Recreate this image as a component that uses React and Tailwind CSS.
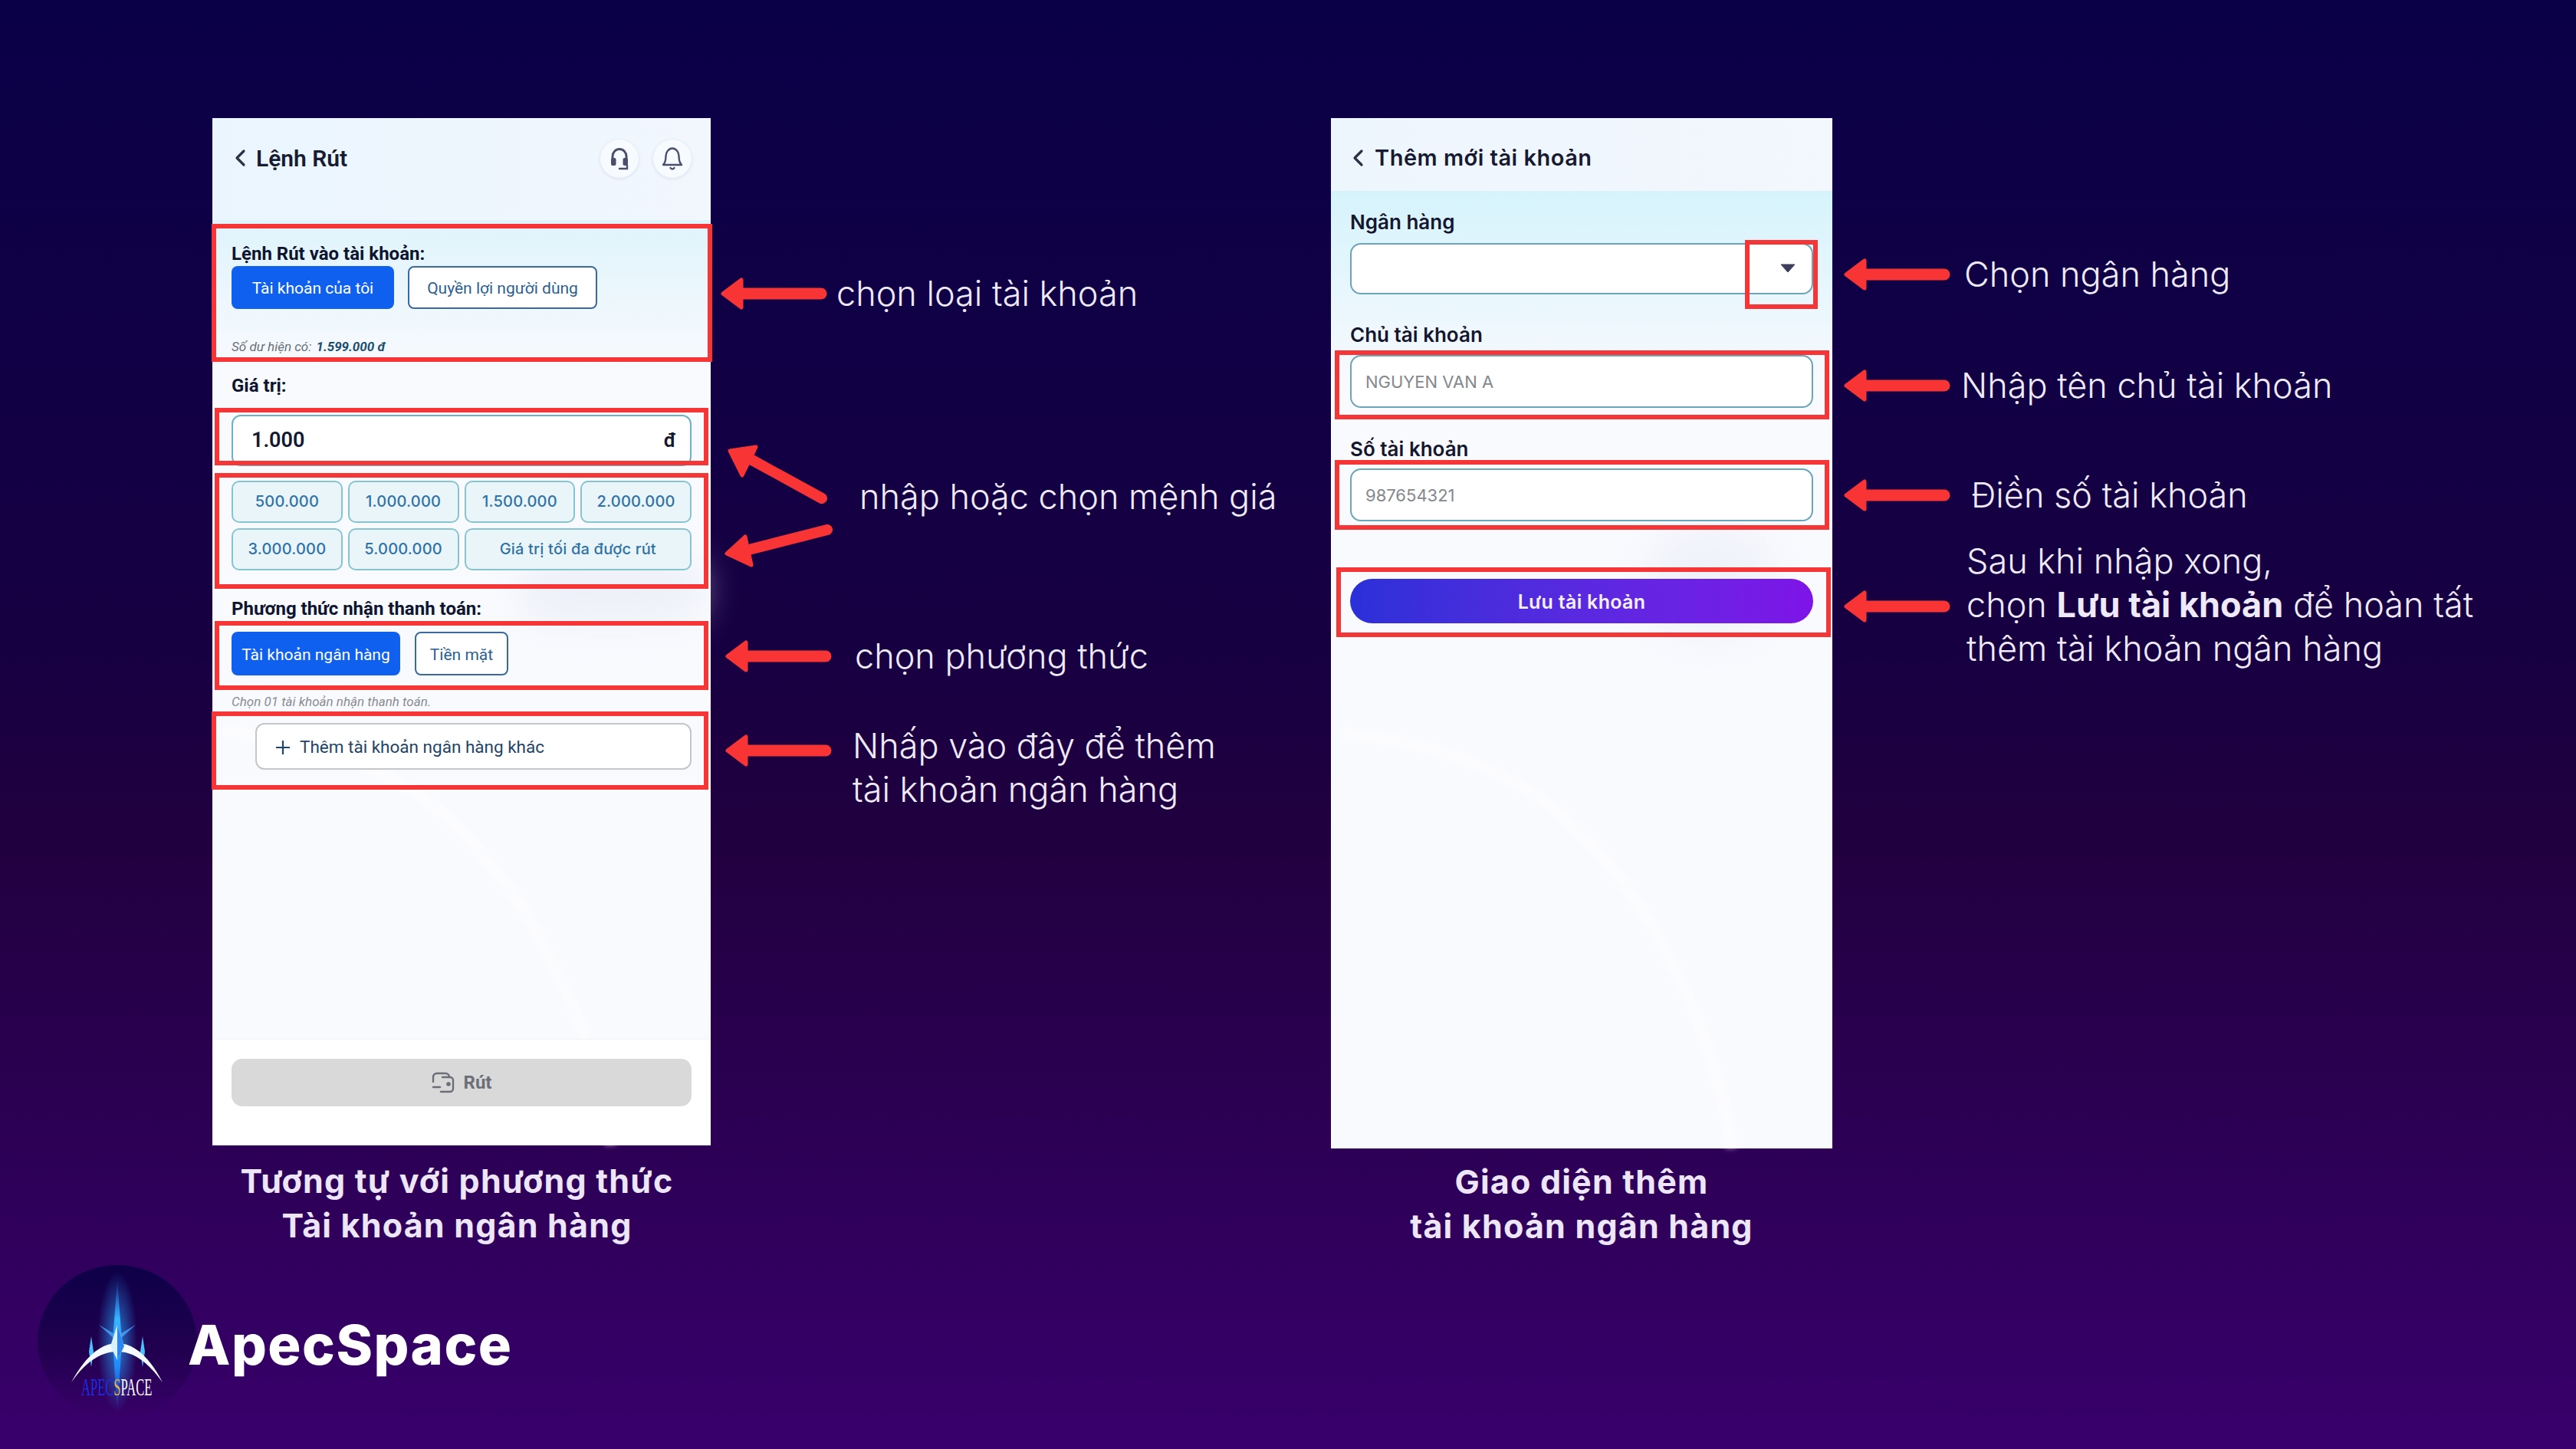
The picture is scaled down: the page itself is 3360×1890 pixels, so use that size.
const note = "font-['Inter',sans-serif] font-light text-[45px] leading-[57px] text-[#efeafa] whitespace-nowrap"
const active = "flex items-center justify-center pt-[4px] rounded-[8px] bg-[#1060ef] text-white text-[21px] font-['Roboto',sans-serif]"
const outline = "flex items-center justify-center pt-[4px] rounded-[8px] border-2 border-[#3a6a9c] bg-white text-[#2b5f94] text-[21px] font-['Roboto',sans-serif]"
const chip = "flex items-center justify-center pb-[1px] h-[55px] rounded-[10px] border-2 border-[#86c5cf] bg-[#e9f5f9] text-[#2f72a8] text-[20px] tracking-[0.2px] font-['Inter',sans-serif] font-medium"
const mark = "absolute border-[6px] border-[#f63636] pointer-events-none"
const label = "font-['Roboto',sans-serif] font-bold text-[24px] leading-[28px] text-[#0d1530]"
const fieldLabel = "font-['Inter',sans-serif] font-semibold text-[26px] leading-[30px] text-[#14172f]"
const field = "flex items-center px-[18px] pt-[2px] rounded-[14px] border-2 border-[#6aa5ba] bg-white text-[#85888e] text-[22px] font-['Inter',sans-serif]"
const caption = "font-['Inter',sans-serif] font-bold text-[43px] tracking-[1.2px] leading-[58px] text-[#ece6f8] text-center whitespace-nowrap"

function Arrow() {
  return (
    <svg width="140" height="44" viewBox="0 0 140 44" className="shrink-0">
      <path d="M4 22 L28 4 L28 40 Z" fill="#f93434" stroke="#f93434" strokeWidth="5" strokeLinejoin="round" />
      <line x1="28" y1="22" x2="132" y2="22" stroke="#f93434" strokeWidth="15" strokeLinecap="round" />
    </svg>
  )
}

function Chevron() {
  return (
    <svg width="16" height="24" viewBox="0 0 16 24" fill="none" className="shrink-0">
      <path d="M13 3 L4 12 L13 21" stroke="#2c3145" strokeWidth="3.2" strokeLinecap="round" strokeLinejoin="round" />
    </svg>
  )
}

// white arc that runs faintly through the app's background
function Arc() {
  return (
    <svg className="absolute inset-0 w-full h-full pointer-events-none blur-[3px]" viewBox="0 0 650 1340" fill="none">
      <path d="M12 800 C130 810 230 850 292 900 C360 960 410 1030 437 1090 C480 1170 505 1240 520 1340" stroke="#ffffff" strokeWidth="16" opacity="0.5" />
    </svg>
  )
}

function Logo() {
  return (
    <svg width="208" height="200" viewBox="0 0 208 200" className="shrink-0">
      <defs>
        <linearGradient id="disc" x1="0" y1="0" x2="0" y2="1">
          <stop offset="0" stopColor="#0d0048" />
          <stop offset="0.55" stopColor="#21004f" />
          <stop offset="1" stopColor="#380069" />
        </linearGradient>
        <linearGradient id="spike" x1="0" y1="0" x2="0" y2="1">
          <stop offset="0" stopColor="#1d7cff" stopOpacity="0" />
          <stop offset="0.3" stopColor="#38b4ff" />
          <stop offset="0.65" stopColor="#1f8cff" />
          <stop offset="1" stopColor="#1d5cff" stopOpacity="0" />
        </linearGradient>
        <radialGradient id="glow">
          <stop offset="0" stopColor="#2aa6ff" stopOpacity="0.75" />
          <stop offset="1" stopColor="#2aa6ff" stopOpacity="0" />
        </radialGradient>
      </defs>
      <ellipse cx="104" cy="100" rx="104" ry="100" fill="url(#disc)" />
      <ellipse cx="104" cy="100" rx="26" ry="92" fill="url(#glow)" />
      <path d="M104 18 L110 100 L104 192 L98 100 Z" fill="url(#spike)" />
      <path d="M70 93 L70 133 L73 113 Z M70 93 L67 113 L70 133 Z" fill="#49c2ff" />
      <path d="M137 93 L137 133 L140 113 Z M137 93 L134 113 L137 133 Z" fill="#49c2ff" />
      <path d="M80 78 L104 92 L128 78 L106 98 L102 98 Z" fill="#4aa5ff" opacity="0.8" />
      <path d="M44 153 C62 120 82 102 104 102 C126 102 146 120 163 153 C144 127 126 113 104 113 C82 113 62 127 44 153 Z" fill="#f4fbff" />
      <path d="M104 78 L113 106 L104 124 L95 106 Z" fill="#d8f2ff" />
      <path d="M104 78 L104 124 L113 106 Z" fill="#2b86f2" />
      <text transform="translate(57 170) scale(0.518 1)" fontFamily="Liberation Serif" fontSize="32" fill="#1c2fe0">
        APEC<tspan fill="#e0b552">S</tspan><tspan fill="#ffffff">PACE</tspan>
      </text>
    </svg>
  )
}

function WithdrawPhone() {
  return (
    <div className="relative w-[650px] h-[1340px] flex flex-col overflow-visible bg-[#f9fafe]">
      <Arc />
      <div className="absolute left-[400px] top-[570px] w-[240px] h-[90px] rounded-full bg-[#e6eaf5] blur-[24px] opacity-60" />
      <header className="relative h-[133px] flex items-start px-[28px] pt-[28px] bg-gradient-to-r from-[#eaf5fd] to-[#f2f7fe]">
        <div className="flex items-center gap-[13px] h-[48px]">
          <Chevron />
          <span className="font-['Roboto',sans-serif] font-semibold text-[30px] text-[#171c33]">Lệnh Rút</span>
        </div>
        <div className="ml-auto mr-[-3px] flex gap-[19px]">
          <div className="w-[50px] h-[50px] rounded-full bg-[#f7fafe] shadow-[0_1px_4px_rgba(80,110,150,0.18)] flex items-center justify-center">
            <svg width="30" height="32" viewBox="0 0 30 32" fill="none">
              <path d="M6 18 V13 a9 9.5 0 0 1 18 0 V18" stroke="#4c4f6b" strokeWidth="3" />
              <rect x="4" y="15" width="6.5" height="10" rx="2" fill="#4c4f6b" />
              <rect x="19.5" y="15" width="6.5" height="10" rx="2" fill="#4c4f6b" />
              <path d="M25 25 V29 H15" stroke="#4c4f6b" strokeWidth="2.4" strokeLinecap="round" />
            </svg>
          </div>
          <div className="w-[50px] h-[50px] rounded-full bg-[#f7fafe] shadow-[0_1px_4px_rgba(80,110,150,0.18)] flex items-center justify-center">
            <svg width="30" height="32" viewBox="0 0 30 32" fill="none">
              <path d="M3 24 H27 C24 21 23.5 18 23.5 12.5 C23.5 7 19.5 2.5 15 2.5 C10.5 2.5 6.5 7 6.5 12.5 C6.5 18 6 21 3 24 Z" stroke="#4c4f6b" strokeWidth="2.4" strokeLinejoin="round" />
              <path d="M12.5 28 C13.5 30 16.5 30 17.5 28" stroke="#4c4f6b" strokeWidth="2.4" strokeLinecap="round" />
            </svg>
          </div>
        </div>
      </header>

      <div className="relative flex-1 flex flex-col px-[25px] pt-[30px] bg-gradient-to-b from-[#dff4fb] to-transparent to-[200px]">
        <div className={label}>Lệnh Rút vào tài khoản:</div>
        <div className="mt-[2px] flex gap-[18px]">
          <div className={active + " w-[212px] h-[56px]"}>Tài khoản của tôi</div>
          <div className={outline + " w-[247px] h-[56px]"}>Quyền lợi người dùng</div>
        </div>
        <div className="mt-[38px] font-['Roboto',sans-serif] italic text-[17px] leading-[22px] text-[#6a6f78]">
          Số dư hiện có: <span className="ml-[2px] font-bold text-[#1a4f70]">1.599.000 đ</span>
        </div>
        <div className={label + " mt-[26px]"}>Giá trị:</div>
        <div className="mt-[24px] h-[67px] flex items-center justify-between pl-[24px] pr-[18px] rounded-[12px] border-2 border-[#6fb0c2] bg-white font-['Roboto',sans-serif] font-semibold text-[#141a33]">
          <span className="text-[27px]">1.000</span>
          <span className="text-[26px]">đ</span>
        </div>
        <div className="mt-[19px] grid grid-cols-4 gap-[7px]">
          <div className={chip}>500.000</div>
          <div className={chip}>1.000.000</div>
          <div className={chip}>1.500.000</div>
          <div className={chip}>2.000.000</div>
          <div className={chip}>3.000.000</div>
          <div className={chip}>5.000.000</div>
          <div className={chip + " col-span-2"}>Giá trị tối đa được rút</div>
        </div>
        <div className={label + " mt-[36px]"}>Phương thức nhận thanh toán:</div>
        <div className="mt-[16px] flex gap-[19px]">
          <div className={active + " w-[220px] h-[57px]"}>Tài khoản ngân hàng</div>
          <div className={outline + " w-[122px] h-[57px]"}>Tiền mặt</div>
        </div>
        <div className="mt-[23px] font-['Roboto',sans-serif] italic text-[17px] leading-[22px] text-[#8a8d94]">Chọn 01 tài khoản nhận thanh toán.</div>
        <div className="mt-[17px] ml-[31px] h-[61px] flex items-center gap-[12px] pl-[24px] pt-[2px] rounded-[12px] border-2 border-[#c4c6ca] bg-white font-['Roboto',sans-serif] text-[22.5px] text-[#1f4468]">
          <svg width="20" height="20" viewBox="0 0 20 20" fill="none">
            <path d="M10 1 V19 M1 10 H19" stroke="#1f4468" strokeWidth="2.2" />
          </svg>
          Thêm tài khoản ngân hàng khác
        </div>
      </div>

      <footer className="relative h-[139px] px-[25px] pt-[25px] bg-white border-t border-[#f2f3f6]">
        <div className="h-[62px] flex items-center justify-center gap-[12px] rounded-[14px] bg-[#d9d9d9] font-['Roboto',sans-serif] font-bold text-[24px] text-[#6b6f78]">
          <svg width="30" height="28" viewBox="0 0 30 28" fill="none">
            <path d="M2 13 V7 a5 5 0 0 1 5 -5 H18 a5 5 0 0 1 5 5" stroke="#6b6f78" strokeWidth="2.4" strokeLinecap="round" />
            <path d="M14 7 H24 a4 4 0 0 1 4 4 V22 a4 4 0 0 1 -4 4 H12" stroke="#6b6f78" strokeWidth="2.4" strokeLinecap="round" />
            <path d="M2 20 H11" stroke="#6b6f78" strokeWidth="2.4" strokeLinecap="round" />
            <circle cx="22" cy="16" r="2.8" fill="#6b6f78" />
          </svg>
          Rút
        </div>
      </footer>

      <div className={mark + " left-[-1px] top-[138px] w-[653px] h-[180px]"} />
      <div className={mark + " left-[3px] top-[378px] w-[644px] h-[75px]"} />
      <div className={mark + " left-[3px] top-[463px] w-[644px] h-[151px]"} />
      <div className={mark + " left-[3px] top-[656px] w-[644px] h-[90px]"} />
      <div className={mark + " left-[-1px] top-[774px] w-[648px] h-[102px]"} />
    </div>
  )
}

function AddAccountPhone() {
  return (
    <div className="relative w-[654px] h-[1344px] flex flex-col bg-[#f9fafe]">
      <Arc />
      <div className="absolute left-[410px] top-[530px] w-[170px] h-[150px] rounded-full bg-[#e6eaf5] blur-[28px] opacity-50" />
      <header className="relative h-[95px] flex items-start gap-[14px] pl-[27px] pt-[28px] bg-gradient-to-r from-[#eef6fd] to-[#f3f7fe]">
        <div className="h-[48px] flex items-center"><Chevron /></div>
        <span className="font-['Inter',sans-serif] font-semibold text-[29px] tracking-[0.5px] leading-[48px] text-[#171a33]">Thêm mới tài khoản</span>
      </header>

      <div className="relative flex-1 flex flex-col px-[25px] pt-[26px] bg-gradient-to-b from-[#d6f3fc] to-transparent to-[260px]">
        <div className={fieldLabel}>Ngân hàng</div>
        <div className={field + " mt-[12px] h-[67px] justify-end"}>
          <svg width="20" height="12" viewBox="0 0 20 12" className="mr-[3px] mb-[4px]">
            <path d="M1 1 H19 L10 11 Z" fill="#3d3d5c" stroke="#3d3d5c" strokeLinejoin="round" />
          </svg>
        </div>
        <div className={fieldLabel + " mt-[38px]"}>Chủ tài khoản</div>
        <div className={field + " mt-[11px] h-[69px]"}>NGUYEN VAN A</div>
        <div className={fieldLabel + " mt-[39px]"}>Số tài khoản</div>
        <div className={field + " mt-[10px] h-[69px]"}>987654321</div>
        <div className="mt-[75px] h-[58px] flex items-center justify-center pt-[4px] rounded-[29px] bg-gradient-to-r from-[#2a30d8] to-[#7e14e8] font-['Inter',sans-serif] font-semibold text-[25px] tracking-[0.3px] text-[#f5f0ff]">
          Lưu tài khoản
        </div>
      </div>

      <div className={mark + " left-[540px] top-[159px] w-[95px] h-[90px]"} />
      <div className={mark + " left-[5px] top-[303px] w-[645px] h-[90px]"} />
      <div className={mark + " left-[5px] top-[446px] w-[645px] h-[91px]"} />
      <div className={mark + " left-[7px] top-[586px] w-[645px] h-[91px]"} />
    </div>
  )
}

export default function App() {
  return (
    <div className="w-[3360px] h-[1890px] overflow-hidden flex flex-col bg-[linear-gradient(180deg,#0a0048_0%,#170042_45%,#21003f_58%,#38006c_100%)]">
      <div className="flex pt-[154px] pl-[277px]">
        <div className="w-[650px] shrink-0">
          <WithdrawPhone />
          <div className={caption + " mt-[17px] pr-[12px]"}>
            Tương tự với phương thức
            <br />
            Tài khoản ngân hàng
          </div>
        </div>

        <div className="w-[809px] shrink-0 flex flex-col pl-[12px] pt-[200px]">
          <div className="flex items-center gap-[12px]">
            <Arrow />
            <span className={note}>chọn loại tài khoản</span>
          </div>
          <div className="mt-[146px] flex items-center gap-[32px]">
            <svg width="150" height="180" viewBox="0 0 150 180" className="shrink-0 mt-[8px]">
              <path d="M13 23 L47 18 L29 55 Z" fill="#f93434" stroke="#f93434" strokeWidth="5" strokeLinejoin="round" />
              <line x1="40" y1="34" x2="133" y2="85" stroke="#f93434" strokeWidth="14" strokeLinecap="round" />
              <path d="M9 157 L33 135 L41 172 Z" fill="#f93434" stroke="#f93434" strokeWidth="5" strokeLinejoin="round" />
              <line x1="38" y1="152" x2="140" y2="126" stroke="#f93434" strokeWidth="14" strokeLinecap="round" />
            </svg>
            <span className={note + " mb-[8px]"}>nhập hoặc chọn mệnh giá</span>
          </div>
          <div className="mt-[82px] ml-[6px] flex items-center gap-[30px]">
            <Arrow />
            <span className={note}>chọn phương thức</span>
          </div>
          <div className="mt-[60px] ml-[6px] flex items-start gap-[27px]">
            <div className="mt-[13px]"><Arrow /></div>
            <span className={note}>
              Nhấp vào đây để thêm
              <br />
              tài khoản ngân hàng
            </span>
          </div>
        </div>

        <div className="w-[654px] shrink-0">
          <AddAccountPhone />
          <div className={caption + " mt-[14px]"}>
            Giao diện thêm
            <br />
            tài khoản ngân hàng
          </div>
        </div>

        <div className="flex-1 flex flex-col pl-[14px] pt-[175px]">
          <div className="flex items-center gap-[18px]">
            <Arrow />
            <span className={note}>Chọn ngân hàng</span>
          </div>
          <div className="mt-[88px] flex items-center gap-[14px]">
            <Arrow />
            <span className={note}>Nhập tên chủ tài khoản</span>
          </div>
          <div className="mt-[86px] flex items-center gap-[27px]">
            <Arrow />
            <span className={note}>Điền số tài khoản</span>
          </div>
          <div className="mt-[29px] flex items-start gap-[21px]">
            <div className="mt-[66px]"><Arrow /></div>
            <span className={note}>
              Sau khi nhập xong,
              <br />
              chọn <b className="font-bold">Lưu tài khoản</b> để hoàn tất
              <br />
              thêm tài khoản ngân hàng
            </span>
          </div>
        </div>
      </div>

      <div className="mt-[22px] pl-[49px] flex items-center">
        <Logo />
        <span className="ml-[-12px] mt-[8px] font-['Inter',sans-serif] font-extrabold text-[72px] tracking-[1.5px] leading-[84px] text-white">ApecSpace</span>
      </div>
    </div>
  )
}
